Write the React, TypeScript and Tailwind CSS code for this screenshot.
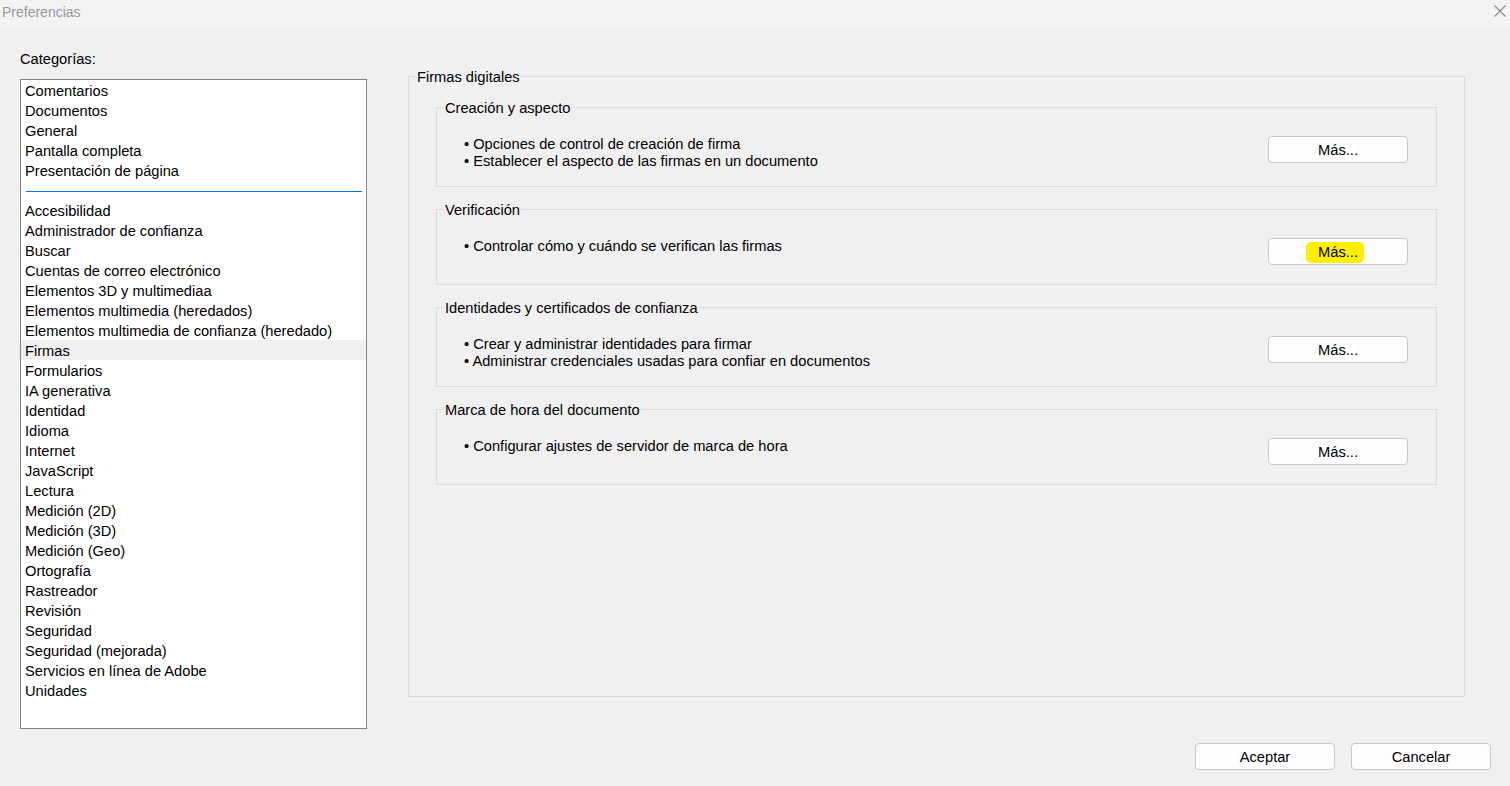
import React from 'react';

const categories: (string | null)[] = [
  'Comentarios',
  'Documentos',
  'General',
  'Pantalla completa',
  'Presentación de página',
  null,
  'Accesibilidad',
  'Administrador de confianza',
  'Buscar',
  'Cuentas de correo electrónico',
  'Elementos 3D y multimediaa',
  'Elementos multimedia (heredados)',
  'Elementos multimedia de confianza (heredado)',
  'Firmas',
  'Formularios',
  'IA generativa',
  'Identidad',
  'Idioma',
  'Internet',
  'JavaScript',
  'Lectura',
  'Medición (2D)',
  'Medición (3D)',
  'Medición (Geo)',
  'Ortografía',
  'Rastreador',
  'Revisión',
  'Seguridad',
  'Seguridad (mejorada)',
  'Servicios en línea de Adobe',
  'Unidades',
];

const sections = [
  {
    title: 'Creación y aspecto',
    bullets: ['Opciones de control de creación de firma', 'Establecer el aspecto de las firmas en un documento'],
  },
  { title: 'Verificación', bullets: ['Controlar cómo y cuándo se verifican las firmas'], marked: true },
  {
    title: 'Identidades y certificados de confianza',
    bullets: ['Crear y administrar identidades para firmar', 'Administrar credenciales usadas para confiar en documentos'],
  },
  { title: 'Marca de hora del documento', bullets: ['Configurar ajustes de servidor de marca de hora'] },
];

function WinButton({ label, marked }: { label: string; marked?: boolean }) {
  return (
    <button className="relative w-[140px] h-[27px] shrink-0 rounded-[4px] border border-[#c8c8c8] bg-[#fdfdfd] text-black leading-[25px]">
      {marked && <span className="absolute left-[37px] top-[3px] w-[58px] h-[21px] rounded-[5px] bg-[#ffee00]" />}
      <span className="relative top-[1px]">{label}</span>
    </button>
  );
}

export default function App() {
  return (
    <div
      className="w-[1510px] h-[786px] bg-[#f0f0f0] flex flex-col text-[14.67px] text-black overflow-hidden"
      style={{ fontFamily: '"Liberation Sans", Arial, sans-serif' }}
    >
      {/* title bar */}
      <div className="h-[29px] bg-[#f3f3f3] flex items-start justify-between shrink-0">
        <span className="pl-[2px] leading-[24px] text-[14px] text-[#999999]">Preferencias</span>
        <svg className="mt-[5px] mr-[4px]" width="12" height="12" viewBox="0 0 12 12">
          <path d="M0.5 0.5 L11.5 11.5 M11.5 0.5 L0.5 11.5" stroke="#8a8a8a" strokeWidth="1.1" />
        </svg>
      </div>

      <div className="flex pl-[20px] pt-[19px]">
        {/* categories */}
        <div className="w-[347px] shrink-0">
          <div className="leading-[20px] pt-[1px]">Categorías:</div>
          <div className="mt-[10px] h-[650px] border border-[#828790] bg-white">
            {categories.map((c, i) =>
              c === null ? (
                <div key={i} className="h-[20px] pt-[11px] pl-[5px] pr-[4px]">
                  <div className="h-px bg-[#0a7ad8]" />
                </div>
              ) : (
                <div
                  key={i}
                  className={`h-[20px] leading-[20px] pl-[4px] whitespace-nowrap ${c === 'Firmas' ? 'bg-[#f0f0f0]' : ''}`}
                >
                  <span className="relative top-[1px]">{c}</span>
                </div>
              )
            )}
          </div>
        </div>

        {/* digital signatures */}
        <fieldset className="ml-[41px] mt-[18px] w-[1057px] h-[631px] border border-[#dcdcdc] px-[7px]">
          <legend className="px-[1px] leading-[20px]">
            <span className="relative top-[1px]">Firmas digitales</span>
          </legend>
          <div className="px-[20px] pt-[11px] flex flex-col gap-[12px]">
            {sections.map((s) => (
              <fieldset key={s.title} className="border border-[#dcdcdc] px-[7px]">
                <legend className="px-[1px] leading-[20px]">
                  <span className="relative top-[1px]">{s.title}</span>
                </legend>
                <div className="flex items-start justify-between pt-[19px] pl-[20px] pr-[21px]">
                  <div className="leading-[17px] pb-[16px]">
                    {s.bullets.map((b) => (
                      <div key={b}>• {b}</div>
                    ))}
                  </div>
                  <div className="pb-[19px]">
                    <WinButton label="Más..." marked={s.marked} />
                  </div>
                </div>
              </fieldset>
            ))}
          </div>
        </fieldset>
      </div>

      <div className="mt-[14px] flex justify-end gap-[16px] pr-[19px]">
        <WinButton label="Aceptar" />
        <WinButton label="Cancelar" />
      </div>
    </div>
  );
}
